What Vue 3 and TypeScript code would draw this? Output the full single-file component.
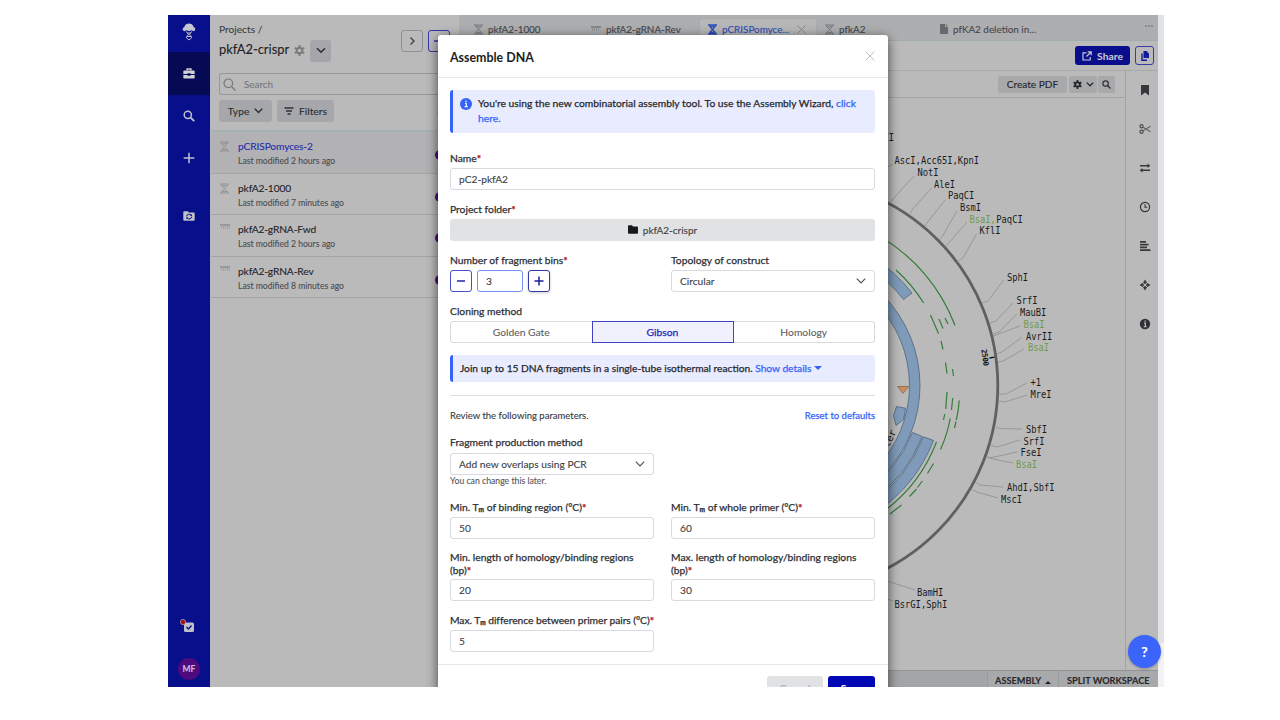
<script setup lang="ts">
interface FileRow { name: string; modified: string; kind: 'construct' | 'primer'; active?: boolean }
interface Site { x: number; y: number; text: string; cut?: boolean; line?: string }

const files: FileRow[] = [
  { name: 'pCRISPomyces-2', modified: 'Last modified 2 hours ago', kind: 'construct', active: true },
  { name: 'pkfA2-1000', modified: 'Last modified 7 minutes ago', kind: 'construct' },
  { name: 'pkfA2-gRNA-Fwd', modified: 'Last modified 2 hours ago', kind: 'primer' },
  { name: 'pkfA2-gRNA-Rev', modified: 'Last modified 8 minutes ago', kind: 'primer' },
]

const sites: Site[] = [
  { x: 883.5, y: 137, text: 'CI' },
  { x: 894.5, y: 160.5, text: 'AscI,Acc65I,KpnI', line: '893,164 886,168' },
  { x: 917.5, y: 172, text: 'NotI', line: '914,176 892,200 890,203' },
  { x: 934, y: 184, text: 'AleI', line: '931.5,188 912,210 910,214' },
  { x: 948, y: 195.5, text: 'PaqCI', line: '945,200 927,223 925,226' },
  { x: 960, y: 207, text: 'BsmI', line: '957,211 942,237 939,240' },
  { x: 969.5, y: 219, text: 'BsaI,', cut: true, line: '967,222 947,245 945,247' },
  { x: 996.3, y: 219, text: 'PaqCI' },
  { x: 979.5, y: 230.5, text: 'KflI', line: '976.5,234 963,258 957,262' },
  { x: 1007, y: 277.5, text: 'SphI', line: '1003.5,280 988,301 982,303' },
  { x: 1016.5, y: 300.5, text: 'SrfI', line: '1013,303 996,321 990,323' },
  { x: 1020, y: 312.5, text: 'MauBI', line: '1017,314 999,332 993,334' },
  { x: 1023.5, y: 324, text: 'BsaI', cut: true, line: '1020,326 993,336' },
  { x: 1026, y: 336, text: 'AvrII', line: '1022,337 1002,352 997,354' },
  { x: 1028, y: 347.5, text: 'BsaI', cut: true, line: '1024,349 1003,361 998,362' },
  { x: 1030.5, y: 382.5, text: '+1', line: '1027,383 1006,394 999,394' },
  { x: 1030.5, y: 394, text: 'MreI', line: '1027,395 1005,402 999,401' },
  { x: 1026, y: 429, text: 'SbfI', line: '1022,429 1001,428.5 996,427.5' },
  { x: 1023.5, y: 441, text: 'SrfI', line: '1020,440 997,447 990,445' },
  { x: 1020.5, y: 452.5, text: 'FseI', line: '1017,452 990,458 987,457' },
  { x: 1016, y: 464, text: 'BsaI', cut: true, line: '1013,463 993,459 987,457' },
  { x: 1007, y: 487.5, text: 'AhdI,SbfI', line: '1003,487 980,485 975,482' },
  { x: 1001, y: 499.5, text: 'MscI', line: '998,498 977,492 971,489' },
  { x: 917, y: 592.5, text: 'BamHI', line: '915,590 887,581' },
  { x: 894.5, y: 604.5, text: 'BsrGI,SphI', line: '893,601 887,599' },
]

const primerMarks: string[] = [
  'M880 236.500A174 174 0 0 1 955 325.500',
  'M896 270A156 156 0 0 1 923.700 303',
  'M930.500 315L938.500 333.500',
  'M939 319L943 328.500',
  'M945 318L948 324',
  'M941 341L943 349.500',
  'M945.500 362.500L947 373.500',
  'M952.500 369L953.500 376',
  'M947 392L945.700 409',
  'M952.700 398L951.500 410',
  'M959.200 400.500Q958.500 411 956.300 420',
  'M956 421.500L954.500 428',
  'M944.700 414L943.500 420',
  'M950.200 418.500Q947.500 434 940.500 449.500',
  'M936.500 442A156 156 0 0 1 880 514',
  'M933.500 463.500L927.500 473.500',
  'M922.300 481L917.500 487.500',
  'M916.500 489L909.500 496.500',
  'M901.500 505L890 514',
]
</script>

<template>
  <main class="page">
    <div class="app">
      <nav class="nav">
        <div class="nav-item logo">
          <svg width="14" height="18" viewBox="0 0 14 18"><path d="M1.500 7.800C0 6.500.8 4.500 2.200 4.200C3 1.300 5 .4 7 .4s4 .9 4.800 3.800c1.400.3 2.200 2.300.7 3.600-1 .8-2.200.1-2.800-.5-1.600.9-3.800.9-5.400 0-.6.600-1.800 1.300-2.800.5z" fill="#c4c5ce" /><path d="M4.500 8.500c0 3 5 3 5 5.500 0 1.500-1 2-2.500 2.900M9.500 8.500c0 3-5 3-5 5.500 0 1.500 1 2 2.500 2.900M5 10h4M5 13.500h4" fill="none" stroke="#b4b6c6" stroke-width="1" /></svg>
        </div>
        <div class="nav-item current">
          <svg width="12" height="11" viewBox="0 0 12 11"><path d="M4 2.500V1h4v1.500" fill="none" stroke="#d0d0d4" stroke-width="1.300" /><path d="M1.300 2.400h9.400q1 0 1 1v2.700H7.500v-.8h-3v.8H.3V3.400q0-1 1-1zM.3 7h4.200v.8h3V7h4.200v2.500q0 1-1 1H1.300q-1 0-1-1z" fill="#d0d0d4" /></svg>
        </div>
        <div class="nav-item">
          <svg width="12" height="12" viewBox="0 0 12 12"><circle cx="4.800" cy="4.800" r="3.600" fill="none" stroke="#bfc0cc" stroke-width="1.500" /><path d="M7.600 7.600L11.200 11.200" stroke="#bfc0cc" stroke-width="1.900" /></svg>
        </div>
        <div class="nav-item">
          <svg width="12" height="12" viewBox="0 0 12 12"><path d="M6 .7v10.600M.7 6h10.600" stroke="#bfc0cc" stroke-width="1.500" /></svg>
        </div>
        <div class="nav-item sync">
          <svg width="12" height="10" viewBox="0 0 12 10"><path d="M1.200.3h3.600l1.200 1.200h4.800q.9 0 .9.900v6.400q0 .9-.9.900H1.200q-.9 0-.9-.9V1.200q0-.9.900-.9z" fill="#bfc0c8" /><path d="M3.500 5.300a2.600 2.300 0 0 1 4.600-1.200M8.700 5.700a2.600 2.300 0 0 1-4.600 1.400" fill="none" stroke="#070f8b" stroke-width="1" /><path d="M8.900 2.900v2H6.900zM3.300 8.300v-2h2z" fill="#070f8b" /></svg>
        </div>
        <div class="nav-foot">
          <svg class="tasks" width="15" height="14" viewBox="0 0 15 14"><rect x="4" y="3.500" width="10" height="9.500" rx="1.500" fill="#bebfc7" /><path d="M6.500 8l2 2 3-3.500" fill="none" stroke="#070f8b" stroke-width="1.300" /><circle cx="3" cy="3" r="2.600" fill="#a30b13" stroke="#c7b0b4" stroke-width=".7" /></svg>
          <span class="avatar">MF</span>
        </div>
      </nav>

      <aside class="files">
        <header class="files-head">
          <div class="crumb">Projects /</div>
          <div class="title-row">
            <h1>pkfA2-crispr</h1>
            <svg class="gear" width="11" height="11" viewBox="0 0 12 12"><circle cx="6" cy="6" r="3.100" fill="none" stroke="#7a7b7e" stroke-width="2.200" /><path d="M6 0v2.500M6 9.500V12M.8 3l2.200 1.300M9 7.700L11.200 9M.8 9L3 7.700M9 4.300L11.200 3" stroke="#7a7b7e" stroke-width="2" /></svg>
            <span class="drop"><svg width="10" height="7" viewBox="0 0 10 7"><path d="M1 1.200l4 4 4-4" fill="none" stroke="#303135" stroke-width="1.600" /></svg></span>
            <span class="square"><svg width="7" height="10" viewBox="0 0 7 10"><path d="M1.500 1.500L5 5 1.500 8.500" fill="none" stroke="#3d3e42" stroke-width="1.300" /></svg></span>
            <span class="square blue"><svg width="10" height="10" viewBox="0 0 10 10"><path d="M0 5h8" stroke="#2c2fae" stroke-width="1.500" /></svg></span>
          </div>
          <div class="search">
            <svg width="13" height="13" viewBox="0 0 13 13"><circle cx="5.300" cy="5.300" r="4.300" fill="none" stroke="#77787b" stroke-width="1.200" /><path d="M8.500 8.500l4 4" stroke="#77787b" stroke-width="1.200" /></svg>
            <span>Search</span>
          </div>
          <div class="filters">
            <span class="chip type">Type <svg width="9" height="6" viewBox="0 0 9 6"><path d="M.8.800l3.700 3.700L8.200.8" fill="none" stroke="#303135" stroke-width="1.500" /></svg></span>
            <span class="chip filter"><svg width="10" height="8" viewBox="0 0 10 8"><path d="M.5 1h9M2 4h6M3.500 7h3" stroke="#303135" stroke-width="1.300" /></svg> Filters</span>
            <svg class="sort" width="6" height="12" viewBox="0 0 6 12"><path d="M0 2h5M1 5h5M0 8h5M1 11h5" stroke="#8b8c8f" /></svg>
          </div>
        </header>
        <ul>
          <li v-for="f in files" :key="f.name" :class="{ active: f.active }">
            <svg v-if="f.kind === 'construct'" width="9" height="11" viewBox="0 0 9 11"><path d="M0 1h9M0 10h9M1.200 1c0 2 6.600 7 6.600 9M7.800 1c0 2-6.600 7-6.600 9M2.500 2.700h4M2.500 8.500h4" stroke="#919296" fill="none" /></svg>
            <svg v-else class="comb" width="10" height="6" viewBox="0 0 10 6"><path d="M0 1h10" stroke="#8c8d91" stroke-width="1.500" /><path d="M1.500 1v4M3.500 1v4M5.500 1v4M7.500 1v4M9 1v4" stroke="#9c9da0" stroke-width=".8" /></svg>
            <div><strong>{{ f.name }}</strong><small>{{ f.modified }}</small></div>
            <i class="owner"></i>
          </li>
        </ul>
      </aside>

      <section class="work">
        <div class="tabs">
          <span class="tab t1"><svg width="9" height="11" viewBox="0 0 9 11"><path d="M0 1h9M0 10h9M1.200 1c0 2 6.600 7 6.600 9M7.800 1c0 2-6.600 7-6.600 9M2.500 2.700h4M2.500 8.500h4" stroke="#77787c" fill="none" /></svg>pkfA2-1000</span>
          <span class="tab t2"><svg width="10" height="6" viewBox="0 0 10 6"><path d="M0 1h10" stroke="#77787c" stroke-width="1.500" /><path d="M1.500 1v4M3.500 1v4M5.500 1v4M7.500 1v4" stroke="#8b8c90" stroke-width=".8" /></svg>pkfA2-gRNA-Rev</span>
          <span class="tab t3"><svg width="9" height="11" viewBox="0 0 9 11"><path d="M0 1h9M0 10h9M1.200 1c0 2 6.600 7 6.600 9M7.800 1c0 2-6.600 7-6.600 9M2.500 2.700h4M2.500 8.500h4" stroke="#2c4bb8" stroke-width="1.300" fill="none" /></svg>pCRISPomyce...<svg class="x" width="9" height="9" viewBox="0 0 9 9"><path d="M.5.500l8 8M8.500.5l-8 8" stroke="#858689" /></svg></span>
          <span class="tab t4"><svg width="9" height="11" viewBox="0 0 9 11"><path d="M0 1h9M0 10h9M1.200 1c0 2 6.600 7 6.600 9M7.800 1c0 2-6.600 7-6.600 9M2.500 2.700h4M2.500 8.500h4" stroke="#77787c" fill="none" /></svg>pfkA2</span>
          <span class="tab t5"><svg width="8" height="10" viewBox="0 0 8 10"><path d="M0 .8Q0 0 .8 0H5v3h3v6.200q0 .8-.8.800H.8Q0 10 0 9.200z" fill="#68696d" /><path d="M5.700 0L8 2.300H5.700z" fill="#68696d" /></svg>pfKA2 deletion in...</span>
          <span class="dots"><i></i><i></i><i></i></span>
        </div>
        <div class="actions">
          <span class="share"><svg width="10" height="10" viewBox="0 0 10 10"><path d="M4.500 1.800H1v7.200h7.200V6M5.700.8h3.500v3.500M9 1L4.500 5.500" fill="none" stroke="#c7c8d2" stroke-width="1.200" /></svg>Share</span>
          <span class="copy"><svg width="8" height="10" viewBox="0 0 8 10"><path d="M2.500 0h3L8 2.400V7H2.500z" fill="#151a96" /><path d="M1 2.500v6.700h5" fill="none" stroke="#151a96" stroke-width="1.400" /></svg></span>
        </div>
        <div class="view">
          <div class="main">
            <div class="toolbar">
              <span class="tool pdf">Create PDF</span>
              <span class="tool set"><svg width="9" height="9" viewBox="0 0 12 12"><circle cx="6" cy="6" r="3.100" fill="none" stroke="#26272b" stroke-width="2.600" /><path d="M6 0v2.500M6 9.500V12M.8 3l2.200 1.300M9 7.700L11.200 9M.8 9L3 7.700M9 4.300L11.200 3" stroke="#26272b" stroke-width="2.200" /></svg><svg width="8" height="5" viewBox="0 0 8 5"><path d="M.8.600L4 3.800 7.200.6" fill="none" stroke="#26272b" stroke-width="1.300" /></svg></span>
              <span class="tool find"><svg width="9" height="9" viewBox="0 0 9 9"><circle cx="3.600" cy="3.600" r="2.700" fill="none" stroke="#303135" stroke-width="1.200" /><path d="M5.600 5.600l2.800 2.800" stroke="#303135" stroke-width="1.400" /></svg></span>
            </div>
            <svg class="plasmid" width="666" height="572" viewBox="459 98 666 572">
              <g fill="#7f9bb9" stroke="#4c6580" stroke-width=".8">
                <path fill-rule="evenodd" d="M663 385.500a128.500 128.500 0 1 0 257 0a128.500 128.500 0 1 0-257 0zM673.500 385.500a118 118 0 1 0 236 0a118 118 0 1 0-236 0z" />
                <path d="M912 293L903.500 299.500A141 141 0 0 0 870 268.500L876 259.500A152 152 0 0 1 912 293z" />
                <path d="M912.500 432.500L922.300 436.500A140.500 140.500 0 0 1 870 502L864 493A130 130 0 0 0 912.500 432.500z" />
                <path d="M923.500 436.800L933.500 440.500A152 152 0 0 1 877 511.500L871 503A142 142 0 0 0 923.500 436.800z" />
                <path d="M896.500 406.500L905.700 408.300L903.500 419.500L896 425.500L893.500 415.500z" />
              </g>
              <path d="M897.500 386.500h11l-5.500 7z" fill="#c88f62" stroke="#8e6440" stroke-width=".8" />
              <path v-for="mark in primerMarks" :key="mark" :d="mark" fill="none" stroke="#347d39" stroke-width="1.200" />
              <circle cx="791.300" cy="385.500" r="206.500" fill="none" stroke="#606060" stroke-width="2.800" />
              <template v-for="s in sites" :key="s.y + s.text">
                <polyline v-if="s.line" :points="s.line" fill="none" stroke="#8f8f8f" stroke-width=".8" />
                <text class="site" :class="{ cut: s.cut }" :x="s.x" :y="s.y + 3.700" :textLength="s.text.length * 5.280" lengthAdjust="spacingAndGlyphs">{{ s.text }}</text>
              </template>
              <path d="M989.500 358l5-.9" stroke="#111" stroke-width="1.400" />
              <text class="ruler" transform="translate(981.300 349.500) rotate(82)" textLength="17">2500</text>
              <text class="site" transform="translate(889 448) rotate(-66)">ter</text>
            </svg>
          </div>
          <div class="rail">
            <svg width="12" height="12" viewBox="0 0 12 12"><path d="M2 1h8v10.500L6 8.500 2 11.500z" fill="#37383c" /></svg>
            <svg width="12" height="12" viewBox="0 0 12 12"><circle cx="2.500" cy="3.300" r="1.600" fill="none" stroke="#4b4c50" stroke-width="1.200" /><circle cx="2.500" cy="8.700" r="1.600" fill="none" stroke="#4b4c50" stroke-width="1.200" /><path d="M4 4.200l7.500 4.500M4 7.800l7.500-4.500" stroke="#66676b" stroke-width="1.200" /></svg>
            <svg width="12" height="12" viewBox="0 0 12 12"><path d="M1 3.800h9M2 8.200h9" stroke="#37383c" stroke-width="1.400" /><path d="M8.500 1.500L11.300 3.800 8.500 6zM3.500 6L.7 8.200l2.800 2.300z" fill="#37383c" /></svg>
            <svg width="12" height="12" viewBox="0 0 12 12"><circle cx="6" cy="6" r="4.600" fill="none" stroke="#37383c" stroke-width="1.200" /><path d="M6 3.300V6.300h2.300" fill="none" stroke="#37383c" stroke-width="1.100" /></svg>
            <svg width="12" height="12" viewBox="0 0 12 12"><path d="M1 1.800h6M1 4.600h8.500M1 7.400h7M1 10.200h10.500" stroke="#37383c" stroke-width="1.800" /></svg>
            <svg width="12" height="12" viewBox="0 0 12 12"><path d="M6 .5l2 3.200-2 1.300-2-1.300zM6 11.500l2-3.200L6 7 4 8.300zM.5 6l3.200-2L5 6 3.700 8zM11.500 6l-3.200-2L7 6l1.300 2z" fill="#37383c" /></svg>
            <svg width="12" height="12" viewBox="0 0 12 12"><circle cx="6" cy="6" r="5.200" fill="#303135" /><path d="M5 5.200h1.400v3.300M4.800 8.700h2.700M5.500 3.200h1.300" fill="none" stroke="#bababa" stroke-width="1.200" /></svg>
          </div>
        </div>
        <footer class="status">
          <span class="assembly">ASSEMBLY <i></i></span>
          <span class="split">SPLIT WORKSPACE</span>
        </footer>
      </section>
      <div class="scroll"></div>

      <div class="modal">
        <header><h2>Assemble DNA</h2><svg width="10" height="10" viewBox="0 0 10 10"><path d="M.5.500l9 9M9.500.5l-9 9" stroke="#bdbec2" /></svg></header>
        <div class="body">
          <div class="note first">
            <svg width="12" height="12" viewBox="0 0 12 12"><circle cx="6" cy="6" r="6" fill="#3563fa" /><path d="M5 5.200h1.300v3.200M4.600 8.600h3.200" fill="none" stroke="#fff" stroke-width="1.100" /><circle cx="6" cy="3.300" r=".8" fill="#fff" /></svg>
            <p>You're using the new combinatorial assembly tool. To use the Assembly Wizard, <a>click<br>here.</a></p>
          </div>
          <div class="field f-name"><label>Name<b>*</b></label><div class="input">pC2-pkfA2</div></div>
          <div class="field f-folder">
            <label>Project folder<b>*</b></label>
            <div class="folder"><svg width="10" height="9" viewBox="0 0 10 9"><path d="M.9.300h3l1.200 1.300h4q.9 0 .9.900v5.300q0 .9-.9.900H.9Q0 8.700 0 7.800V1.200Q0 .3.900.3z" fill="#17181b" /></svg>pkfA2-crispr</div>
          </div>
          <div class="cols f-bins">
            <div class="field">
              <label>Number of fragment bins<b>*</b></label>
              <div class="stepper">
                <span class="step"><svg width="10" height="10" viewBox="0 0 10 10"><path d="M1 5h8" stroke="#1d22b3" stroke-width="1.500" /></svg></span>
                <span class="count">3</span>
                <span class="step plus"><svg width="10" height="10" viewBox="0 0 10 10"><path d="M.5 5h9M5 .5v9" stroke="#1a1f9c" stroke-width="1.500" /></svg></span>
              </div>
            </div>
            <div class="field"><label>Topology of construct</label><div class="input select">Circular<svg width="10" height="6" viewBox="0 0 10 6"><path d="M.8.700L5 4.900 9.200.7" fill="none" stroke="#505155" stroke-width="1.200" /></svg></div></div>
          </div>
          <div class="field f-method">
            <label>Cloning method</label>
            <div class="segments"><span>Golden Gate</span><span class="on">Gibson</span><span>Homology</span></div>
          </div>
          <div class="note second"><p>Join up to 15 DNA fragments in a single-tube isothermal reaction. <a>Show details <i></i></a></p></div>
          <hr>
          <div class="review"><span>Review the following parameters.</span><a>Reset to defaults</a></div>
          <div class="field half f-production">
            <label>Fragment production method</label>
            <div class="input select">Add new overlaps using PCR<svg width="10" height="6" viewBox="0 0 10 6"><path d="M.8.700L5 4.900 9.200.7" fill="none" stroke="#505155" stroke-width="1.200" /></svg></div>
            <small>You can change this later.</small>
          </div>
          <div class="cols f-tm">
            <div class="field"><label>Min. T<sub>m</sub> of binding region (ºC)<b>*</b></label><div class="input">50</div></div>
            <div class="field"><label>Min. T<sub>m</sub> of whole primer (ºC)<b>*</b></label><div class="input">60</div></div>
          </div>
          <div class="cols f-length">
            <div class="field"><label>Min. length of homology/binding regions<br>(bp)<b>*</b></label><div class="input">20</div></div>
            <div class="field"><label>Max. length of homology/binding regions<br>(bp)<b>*</b></label><div class="input">30</div></div>
          </div>
          <div class="field half f-diff"><label>Max. T<sub>m</sub> difference between primer pairs (ºC)<b>*</b></label><div class="input">5</div></div>
        </div>
        <footer><span class="cancel">Cancel</span><span class="save">Save</span></footer>
      </div>
      <span class="help">?</span>
    </div>
  </main>
</template>

<style>
body { margin: 0; background: #fff; }
</style>

<style scoped>
* { box-sizing: border-box; }
svg { display: block; flex: none; }
h1, h2, p, ul { margin: 0; padding: 0; font-weight: inherit; }
i { font-style: normal; }
.page { height: 720px; padding: 15px 0 0 168px; overflow: hidden; background: #fff; font-family: Lato, "Open Sans", sans-serif; font-size: 10.300px; color: #222327; -webkit-text-stroke: .1px; }
.app { position: relative; display: flex; width: 996px; height: 672px; overflow: hidden; background: #bababa; }

.nav { width: 42px; background: #070f8b; display: flex; flex-direction: column; flex: none; }
.nav-item { height: 42px; display: flex; align-items: center; justify-content: center; }
.logo { height: 37px; padding-bottom: 4px; }
.current { background: #060a55; height: 43px; }
.sync { margin-top: 16px; }
.nav-foot { margin-top: auto; display: flex; flex-direction: column; align-items: center; gap: 25px; padding-bottom: 7px; }
.tasks { margin-right: 4px; }
.avatar { width: 22px; height: 22px; border-radius: 50%; background: #4f0a80; color: #c9b9d6; font-size: 8.500px; font-weight: 700; line-height: 22px; text-align: center; }

.files { width: 249px; flex: none; background: #bababa; border-left: 1px solid #b5b5c4; }
.files-head { height: 117px; padding: 0 0 0 8px; border-bottom: 2px solid #a5b1b3; }
.crumb { padding-top: 8px; height: 24px; line-height: 12px; font-size: 10.200px; color: #3d3e42; }
.title-row { display: flex; align-items: center; height: 23px; }
h1 { font-size: 12.900px; width: 71px; white-space: nowrap; line-height: 16px; margin-top: -3px; }
.gear { margin-left: 4px; }
.drop { width: 21px; height: 22px; border-radius: 3px; background: #a5a6a9; display: flex; align-items: center; justify-content: center; margin-left: 5px; }
.square { width: 22px; height: 22px; border: 1px solid #8f9093; border-radius: 3px; display: flex; align-items: center; justify-content: center; margin: -20px 0 0 70px; }
.square.blue { border-color: #3336a8; margin-left: 5px; }
.search { margin-top: 11px; height: 22px; border: 1px solid #97989a; border-right: 0; border-radius: 3px 0 0 3px; display: flex; align-items: center; gap: 8px; padding-left: 3px; color: #76777a; font-size: 9.900px; }
.filters { display: flex; align-items: center; gap: 5px; padding-top: 5px; }
.chip { height: 22px; border-radius: 3px; background: #a6a7aa; display: flex; align-items: center; gap: 5px; justify-content: center; color: #2b2c30; padding-bottom: 1px; }
.type { width: 53px; }
.filter { width: 57px; }
.sort { margin-left: 98px; }
li { list-style: none; height: 41.600px; padding: 9px 0 0 9px; display: flex; gap: 10px; border-bottom: 1px solid #a5a5a6; }
li svg { width: 9px; }
li > div { margin-left: -1px; }
li .comb { width: 10px; margin-right: -1px; }
li.active { background: #b2b2b5; color: #262bac; }
li strong { display: block; font-weight: 400; line-height: 13px; font-size: 10.200px; letter-spacing: -.12px; margin-top: -1px; }
li small { display: block; font-size: 8.600px; line-height: 12px; margin-top: 2px; color: #4b4c50; }
.owner { width: 10px; height: 10px; border-radius: 50%; background: #4f0a80; margin: 9px 14px 0 auto; }

.work { width: 699px; flex: none; display: flex; flex-direction: column; }
.tabs { height: 26px; background: #adaeb0; border-bottom: 1px solid #a1acad; display: flex; align-items: center; padding: 3px 5px 0 15px; color: #45464a; font-size: 9.900px; }
.tab { display: flex; align-items: center; gap: 5px; height: 22px; white-space: nowrap; flex: none; }
.t1 { width: 117px; }
.t2 { width: 108px; }
.t3 { width: 118px; padding-left: 8px; background: #b7b7b8; border: 1px solid #aaaaac; color: #2c4bb8; border-radius: 3px 3px 0 0; }
.t3 .x { margin-left: 3px; }
.t4 { padding-left: 8px; width: 123px; }
.dots { margin-left: auto; display: flex; gap: 1px; margin-top: -6px; }
.dots i { width: 2px; height: 2px; background: #8a8b8e; }
.actions { height: 30px; border-bottom: 1px solid #a9a9aa; display: flex; justify-content: flex-end; align-items: center; gap: 5px; padding-right: 4px; }
.share { width: 55px; height: 19px; border-radius: 3px; background: #090f8c; color: #c4c5d0; font-weight: 700; display: flex; align-items: center; justify-content: center; gap: 5px; }
.copy { width: 19px; height: 19px; border: 1px solid #383ca4; border-radius: 3px; display: flex; align-items: center; justify-content: center; }
.view { display: flex; flex: 1; min-height: 0; }
.main { width: 666px; }
.toolbar { height: 27px; border-bottom: 1px solid #a5a5a6; display: flex; align-items: center; justify-content: flex-end; padding-right: 10px; gap: 2px; }
.tool { height: 17px; background: #a8a9ab; display: flex; align-items: center; justify-content: center; gap: 4px; border-radius: 2px; }
.pdf { width: 69px; padding-bottom: 1px; font-size: 10.100px; }
.set { width: 28px; }
.find { width: 17px; margin-left: -1px; }
.site { font-family: "DejaVu Sans Mono", monospace; font-size: 10px; fill: #1b1b1b; -webkit-text-stroke: 0; }
.site.cut { fill: #6e9b50; }
.ruler { font-family: "DejaVu Sans Mono", monospace; font-size: 7.500px; font-weight: 700; fill: #111; -webkit-text-stroke: 0; }
.rail { width: 33px; border-left: 1px solid #a3a3a4; display: flex; flex-direction: column; align-items: center; padding: 13px 0 0 5px; gap: 27px; }
.status { height: 17px; flex: none; background: #a4a5a7; border-top: 1px solid #929395; display: flex; justify-content: flex-end; line-height: 19px; font-size: 9.200px; font-weight: 700; color: #27282b; }
.assembly { width: 72px; border-left: 1px solid #9a9b9d; border-right: 1px solid #9a9b9d; padding-left: 7px; background: #a8a9ab; }
.assembly i { display: inline-block; border: 3px solid transparent; border-bottom-color: #222; border-top: 0; margin-left: 2px; }
.split { width: 99px; padding-left: 8px; background: #a8a9ab; white-space: nowrap; }
.scroll { width: 6px; background: linear-gradient(#e1e2e5 0 628px, #f3f3f5 628px); }

.modal { position: absolute; left: 270px; top: 20px; width: 450px; height: 680px; background: #fff; border-radius: 3px 3px 0 0; box-shadow: 0 3px 12px rgba(0, 0, 0, .65); }
.modal > header { height: 43px; border-bottom: 1px solid #e5e6e8; display: flex; align-items: center; justify-content: space-between; padding: 0 13px 0 12px; }
h2 { font-size: 12.400px; font-weight: 700; color: #1c1d20; padding-top: 2px; -webkit-text-stroke: 0; }
.body { padding: 12px 13px 0 12px; height: 586px; }
.note { background: #e8ecfe; border-left: 3px solid #3563fa; border-radius: 3px; font-size: 10.300px; -webkit-text-stroke: .25px; color: #26272c; white-space: nowrap; }
.note a, .review a { color: #3563fa; }
.note.first { height: 43px; display: flex; gap: 6px; padding: 6px 0 0 7px; line-height: 15px; }
.first svg { margin-top: 2px; }
.note.second { height: 27px; line-height: 27px; padding-left: 7px; margin-top: 12px; font-size: 10.200px; }
.second i { display: inline-block; border: 4px solid transparent; border-top-color: #3563fa; border-bottom: 0; vertical-align: 2px; }
.field label { display: block; font-size: 10.300px; -webkit-text-stroke: .25px; line-height: 12px; margin-bottom: 4px; color: #2e2f33; white-space: nowrap; }
.field b { color: #b3161c; }
.field sub { font-size: 6.500px; line-height: 0; font-weight: 900; vertical-align: -1px; }
.input { height: 22px; border: 1px solid #d9dadd; border-radius: 3px; line-height: 21px; padding: 0 8px; color: #3c3d42; font-size: 10.200px; }
.select { display: flex; align-items: center; justify-content: space-between; }
.folder { height: 22px; background: #e1e2e4; border-radius: 3px; display: flex; align-items: center; justify-content: center; gap: 5px; color: #3c3d42; padding-bottom: 1px; font-size: 10px; }
.cols { display: grid; grid-template-columns: 204px 204px; gap: 17px; }
.half { width: 204px; }
.f-name { margin-top: 19px; }
.f-folder { margin-top: 13px; }
.f-bins { margin-top: 13px; }
.f-method { margin-top: 13px; }
.stepper { display: flex; gap: 5px; }
.step { width: 22px; height: 22px; border: 1px solid #4a4fd0; border-radius: 3px; display: flex; align-items: center; justify-content: center; }
.plus { border-color: #34389f; box-shadow: 0 1px 3px rgba(0, 0, 0, .2); }
.count { width: 46px; height: 22px; border: 1px solid #7492f7; border-radius: 3px; padding-left: 8px; line-height: 21px; color: #3c3d42; }
.segments { display: flex; height: 22px; border: 1px solid #d9dadd; border-radius: 3px; color: #5d5e63; }
.segments span { flex: 1; text-align: center; line-height: 20px; }
.segments .on { flex: none; width: 142px; margin: -1px 0; border: 1px solid #3f44c4; background: #f0f1fd; color: #2226b4; -webkit-text-stroke: .25px; }
hr { margin: 13px 0 0; border: 0; border-top: 1px solid #dedfe1; }
.review { display: flex; justify-content: space-between; margin-top: 13px; line-height: 14px; font-size: 9.500px; color: #37383c; }
.review a { -webkit-text-stroke: .25px; }
.f-production { margin-top: 13px; }
.f-production label { margin-bottom: 5px; }
.f-production small { display: block; line-height: 12px; font-size: 8.700px; color: #56575b; }
.f-tm { margin-top: 14px; }
.f-length { margin-top: 12px; }
.f-length label { line-height: 12.500px; margin-bottom: 3px; }
.f-diff { margin-top: 12.500px; }
.f-diff label { letter-spacing: -.05px; }
.modal > footer { border-top: 1px solid #e5e6e8; display: flex; justify-content: flex-end; gap: 5px; padding: 11px 13px 0 0; }
.cancel, .save { height: 22px; border-radius: 3px; line-height: 24px; text-align: center; font-weight: 700; }
.cancel { width: 56px; background: #e1e2e4; color: #b5b6ba; }
.save { width: 47px; background: #0007b4; color: #fff; }
.help { position: absolute; left: 960px; top: 620px; width: 33px; height: 33px; border-radius: 50%; background: #3b64fb; color: #fff; font-size: 14px; font-weight: 700; line-height: 33px; text-align: center; box-shadow: 0 1px 3px rgba(0, 0, 0, .25); }
</style>
